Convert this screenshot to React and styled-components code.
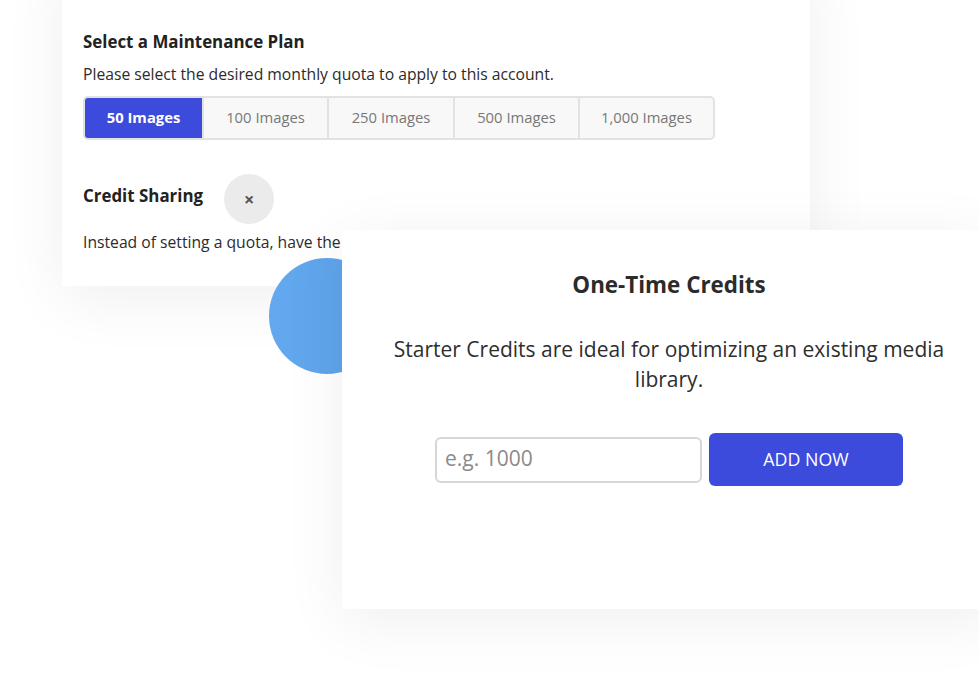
import React from "react";
import styled, { createGlobalStyle } from "styled-components";

const GlobalStyle = createGlobalStyle`
  html, body {
    margin: 0;
    padding: 0;
    background: #ffffff;
    overflow: hidden;
  }
  body {
    font-family: "Open Sans", "Liberation Sans", sans-serif;
    color: #2b2b2b;
  }
`;

const Stage = styled.div`
  position: relative;
  width: 979px;
  height: 673px;
  overflow: hidden;
  background: #fff;
`;

const Card = styled.div`
  position: absolute;
  background: #fff;
  box-shadow: 0 12px 60px rgba(0, 0, 0, 0.065);
`;

const PlanCard = styled(Card)`
  left: 62px;
  top: -40px;
  width: 748px;
  height: 326px;
  padding: 71px 21px 0;
  box-sizing: border-box;
  display: flex;
  flex-direction: column;
`;

const Heading = styled.h3`
  margin: 0;
  font-size: 16.9px;
  font-weight: 700;
  line-height: 22px;
  color: #222;
`;

const Text = styled.p`
  margin: ${(p) => p.$top || 10}px 0 0;
  font-size: 15.7px;
  line-height: 22px;
  color: #2b2b2b;
  white-space: nowrap;
`;

const Segments = styled.div`
  display: flex;
  margin-top: 11px;
  align-self: flex-start;
  border: 2px solid #e2e2e2;
  border-radius: 5px;
  background: #e2e2e2;
  gap: 2px;
  overflow: hidden;
`;

const Segment = styled.button`
  height: 40px;
  width: ${(p) => p.$w}px;
  border: none;
  margin: 0;
  padding: 0 0 3px;
  font-family: "Open Sans", "Liberation Sans", sans-serif;
  font-size: 14.8px;
  font-weight: ${(p) => (p.$active ? 700 : 400)};
  color: ${(p) => (p.$active ? "#fff" : "#777")};
  background: ${(p) => (p.$active ? "#3c4bdc" : "#f8f8f8")};
`;

const SharingRow = styled.div`
  display: flex;
  align-items: center;
  gap: 21px;
  margin-top: 28px;
`;

const CloseDot = styled.span`
  width: 50px;
  height: 50px;
  border-radius: 50%;
  background: #ebebeb;
  color: #555;
  display: flex;
  align-items: center;
  justify-content: center;
  font-size: 18px;
  font-weight: 700;
  margin-top: 6px;
`;

const Bubble = styled.div`
  position: absolute;
  left: 269px;
  top: 258px;
  width: 116px;
  height: 116px;
  border-radius: 50%;
  background: linear-gradient(90deg, #64a9ef, #5aa1e9);
`;

const CreditsCard = styled(Card)`
  left: 342px;
  top: 230px;
  width: 654px;
  height: 379px;
  padding-top: 40px;
  box-sizing: border-box;
  display: flex;
  flex-direction: column;
  align-items: center;
  text-align: center;
`;

const Title = styled.h2`
  margin: 0;
  font-size: 22.4px;
  font-weight: 700;
  line-height: 30px;
  color: #2b2b2b;
`;

const Lead = styled.p`
  margin: 34px 0 0;
  width: 580px;
  font-size: 21px;
  line-height: 30px;
  color: #2e2e2e;
`;

const Form = styled.form`
  display: flex;
  align-items: center;
  gap: 7px;
  margin-top: 39px;
`;

const Input = styled.input`
  width: 267px;
  height: 46px;
  box-sizing: border-box;
  border: 2px solid #d6d6d6;
  border-radius: 6px;
  padding: 0 8px 4px;
  font-family: "Open Sans", "Liberation Sans", sans-serif;
  font-size: 21px;
  color: #333;
  outline: none;
  &::placeholder {
    color: #8a8a8a;
  }
`;

const AddButton = styled.button`
  width: 194px;
  height: 53px;
  border: none;
  border-radius: 6px;
  background: #3c4bdc;
  color: #fff;
  font-family: "Open Sans", "Liberation Sans", sans-serif;
  font-size: 17.8px;
  font-weight: 500;
  padding: 0 0 2px;
`;

const plans = [
  { label: "50 Images", w: 117, active: true },
  { label: "100 Images", w: 123 },
  { label: "250 Images", w: 124 },
  { label: "500 Images", w: 123 },
  { label: "1,000 Images", w: 133 },
];

export default function App() {
  return (
    <Stage>
      <GlobalStyle />
      <PlanCard>
        <Heading>Select a Maintenance Plan</Heading>
        <Text>Please select the desired monthly quota to apply to this account.</Text>
        <Segments>
          {plans.map((p) => (
            <Segment key={p.label} $w={p.w} $active={p.active}>
              {p.label}
            </Segment>
          ))}
        </Segments>
        <SharingRow>
          <Heading>Credit Sharing</Heading>
          <CloseDot>×</CloseDot>
        </SharingRow>
        <Text $top={7}>
          Instead of setting a quota, have the account draw from a shared pool of credits.
        </Text>
      </PlanCard>
      <Bubble />
      <CreditsCard>
        <Title>One-Time Credits</Title>
        <Lead>Starter Credits are ideal for optimizing an existing media library.</Lead>
        <Form onSubmit={(e) => e.preventDefault()}>
          <Input placeholder="e.g. 1000" />
          <AddButton type="submit">ADD NOW</AddButton>
        </Form>
      </CreditsCard>
    </Stage>
  );
}
